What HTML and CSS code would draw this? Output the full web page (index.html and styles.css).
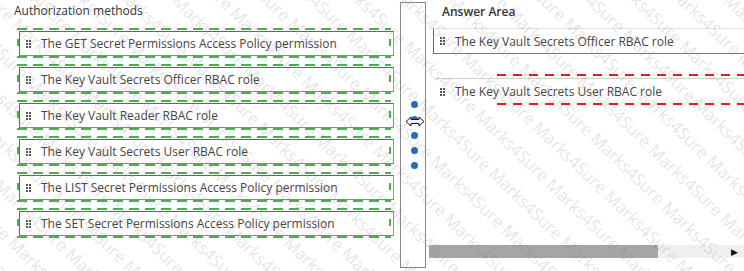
FILE: index.html
```html
<!DOCTYPE html>
<html lang="en">
<head>
    <meta charset="UTF-8">
    <meta name="viewport" content="width=device-width, initial-scale=1.0">
    <title>Authorization methods</title>
    <link rel="stylesheet" href="styles.css">
</head>
<body>
    <div class="page">
        <section class="methods">
            <h2>Authorization methods</h2>
            <ul class="choices">
                <li class="choice"><span class="grip"></span>The GET Secret Permissions Access Policy permission</li>
                <li class="choice"><span class="grip"></span>The Key Vault Secrets Officer RBAC role</li>
                <li class="choice"><span class="grip"></span>The Key Vault Reader RBAC role</li>
                <li class="choice"><span class="grip"></span>The Key Vault Secrets User RBAC role</li>
                <li class="choice"><span class="grip"></span>The LIST Secret Permissions Access Policy permission</li>
                <li class="choice"><span class="grip"></span>The SET Secret Permissions Access Policy permission</li>
            </ul>
        </section>

        <div class="splitter">
            <div class="dots">
                <span></span><span></span><span></span><span></span><span></span>
            </div>
            <!-- resize cursor sitting over the handle -->
            <svg class="cursor" width="20" height="11" viewBox="0 0 20 11">
                <path d="M1 5.5 L6 1 L6 3.5 L14 3.5 L14 1 L19 5.5 L14 10 L14 7.5 L6 7.5 L6 10 Z" fill="#fff" stroke="#111" stroke-width="1"/>
            </svg>
        </div>

        <section class="answer">
            <h2>Answer Area</h2>
            <div class="slot filled"><span class="grip"></span>The Key Vault Secrets Officer RBAC role</div>
            <div class="slot target"><span class="grip"></span>The Key Vault Secrets User RBAC role</div>
            <div class="hscroll">
                <div class="thumb"></div>
                <span class="arrow">&#9654;</span>
            </div>
        </section>

        <div class="watermark" id="watermark"></div>
    </div>

    <script>
        // fill the watermark with diagonal rows of text
        const mark = document.getElementById('watermark');
        const inner = document.createElement('div');
        inner.className = 'watermark-inner';
        for (let i = 0; i < 30; i++) {
            const row = document.createElement('div');
            row.className = 'watermark-row';
            row.textContent = 'Marks4Sure '.repeat(14);
            inner.appendChild(row);
        }
        mark.appendChild(inner);
    </script>
</body>
</html>
```

FILE: styles.css
```css
body {
    margin: 0;
    font-family: "Open Sans", "Noto Sans", sans-serif;
    color: #333;
    background: #fff;
}

.page {
    position: relative;
    display: flex;
    height: 271px;
    overflow: hidden;
}

h2 {
    font-size: 12px;
    line-height: 16px;
    color: #333;
}

.methods {
    width: 400px;
    padding-left: 14px;
    box-sizing: border-box;
}

.methods h2 {
    font-weight: normal;
    margin: 3px 0 0;
}

.choices {
    list-style: none;
    margin: 12px 0 0 5px;
    padding: 0;
    width: 375px;
    display: flex;
    flex-direction: column;
    gap: 11px;
}

.choice {
    position: relative;
    height: 25px;
    box-sizing: border-box;
    border: 1px solid #666;
    border-bottom-color: #888;
    border-right-color: #999;
    display: flex;
    align-items: center;
    padding-left: 6px;
    font-size: 12px;
    color: #444;
}

.choice::after {
    content: "";
    position: absolute;
    top: -4px;
    left: -3px;
    right: 2px;
    bottom: -3px;
    background:
        repeating-linear-gradient(90deg, #4caf50 0 10px, transparent 10px 16px) top / 100% 2px no-repeat,
        repeating-linear-gradient(90deg, #4caf50 0 10px, transparent 10px 16px) bottom / 100% 2px no-repeat,
        linear-gradient(180deg, transparent 0 11px, #4caf50 11px 18px, transparent 18px) left / 2px 100% no-repeat,
        linear-gradient(180deg, transparent 0 11px, #4caf50 11px 18px, transparent 18px) right / 2px 100% no-repeat;
}

/* six-dot drag handle */
.grip {
    width: 2px;
    height: 2px;
    flex-shrink: 0;
    margin: 0 13px 6px 0;
    background: #555;
    box-shadow: 3px 0 #555, 0 3px #555, 3px 3px #555, 0 6px #555, 3px 6px #555;
}

.splitter {
    position: relative;
    width: 26px;
    box-sizing: border-box;
    margin: 2px 0 3px;
    border: 1px solid #888;
    padding: 98px 0 0 3px;
}

.dots {
    display: flex;
    flex-direction: column;
    align-items: center;
    gap: 8.3px;
}

.dots span {
    width: 7px;
    height: 7px;
    border-radius: 50%;
    background: #1e6fc4;
}

.cursor {
    position: absolute;
    top: 113px;
    left: 4px;
}

.answer {
    flex: 1;
    display: flex;
    flex-direction: column;
    min-width: 0;
}

.answer h2 {
    font-weight: 600;
    margin: 4px 0 0 16px;
}

.slot {
    position: relative;
    height: 26px;
    box-sizing: border-box;
    margin-left: 7px;
    display: flex;
    align-items: center;
    padding-left: 6px;
    font-size: 12px;
    color: #444;
    white-space: nowrap;
}

.slot.filled {
    margin-top: 8px;
    border-left: 1px solid #666;
    border-top: 1px solid #e2e2e2;
    border-bottom: 1px solid #777;
}

.slot.target {
    margin-top: 24px;
    margin-left: 9px;
    padding-left: 5px;
    border-top: 1px solid #d0d0d0;
}

.slot.target::after {
    content: "";
    position: absolute;
    top: -5px;
    left: 62px;
    right: 0;
    bottom: -1px;
    background:
        repeating-linear-gradient(90deg, #e41b1b 0 9px, transparent 9px 16px) top / 100% 2px no-repeat,
        repeating-linear-gradient(90deg, #e41b1b 0 9px, transparent 9px 16px) bottom / 100% 2px no-repeat;
}

.hscroll {
    margin: auto 0 13px 3px;
    height: 13px;
    background: #f0f0f0;
    display: flex;
    align-items: center;
    justify-content: space-between;
}

.thumb {
    width: 229px;
    height: 100%;
    background: #a5a5a5;
}

.arrow {
    font-size: 9px;
    color: #111;
    margin-right: 6px;
}

.watermark {
    position: absolute;
    inset: 0;
    overflow: hidden;
    pointer-events: none;
}

.watermark-inner {
    position: absolute;
    top: -420px;
    left: -300px;
    width: 1400px;
    transform: rotate(44deg);
    transform-origin: center;
}

.watermark-row {
    font-family: "Open Sans", sans-serif;
    font-size: 17px;
    line-height: 32px;
    white-space: nowrap;
    color: rgba(120, 120, 120, 0.2);
}

.watermark-row:nth-child(even) {
    margin-left: 50px;
}
```
